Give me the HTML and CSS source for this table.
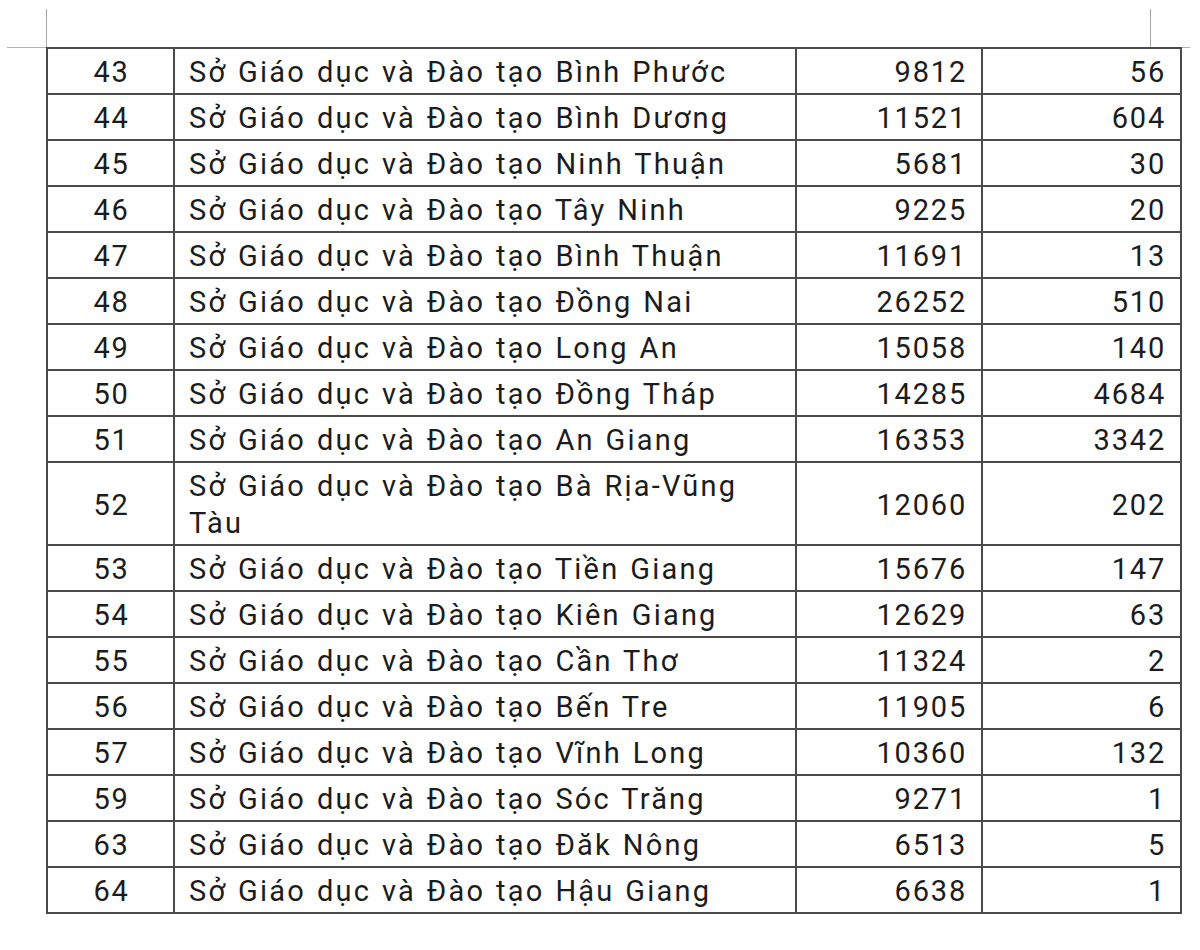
FILE: index.html
```html
<!DOCTYPE html>
<html lang="vi">
<head>
<meta charset="utf-8">
<link rel="stylesheet" href="styles.css">
</head>
<body>
<div class="marks"><div class="ticks"></div></div>
<table class="grid">
<colgroup><col class="c1"><col class="c2"><col class="c3"><col class="c4"></colgroup>
<tbody>
<tr><td class="no">43</td><td class="name">Sở Giáo dục và Đào tạo Bình Phước</td><td class="num">9812</td><td class="num">56</td></tr>
<tr><td class="no">44</td><td class="name">Sở Giáo dục và Đào tạo Bình Dương</td><td class="num">11521</td><td class="num">604</td></tr>
<tr><td class="no">45</td><td class="name">Sở Giáo dục và Đào tạo Ninh Thuận</td><td class="num">5681</td><td class="num">30</td></tr>
<tr><td class="no">46</td><td class="name">Sở Giáo dục và Đào tạo Tây Ninh</td><td class="num">9225</td><td class="num">20</td></tr>
<tr><td class="no">47</td><td class="name">Sở Giáo dục và Đào tạo Bình Thuận</td><td class="num">11691</td><td class="num">13</td></tr>
<tr><td class="no">48</td><td class="name">Sở Giáo dục và Đào tạo Đồng Nai</td><td class="num">26252</td><td class="num">510</td></tr>
<tr><td class="no">49</td><td class="name">Sở Giáo dục và Đào tạo Long An</td><td class="num">15058</td><td class="num">140</td></tr>
<tr><td class="no">50</td><td class="name">Sở Giáo dục và Đào tạo Đồng Tháp</td><td class="num">14285</td><td class="num">4684</td></tr>
<tr><td class="no">51</td><td class="name">Sở Giáo dục và Đào tạo An Giang</td><td class="num">16353</td><td class="num">3342</td></tr>
<tr><td class="no">52</td><td class="name">Sở Giáo dục và Đào tạo Bà Rịa-Vũng Tàu</td><td class="num">12060</td><td class="num">202</td></tr>
<tr><td class="no">53</td><td class="name">Sở Giáo dục và Đào tạo Tiền Giang</td><td class="num">15676</td><td class="num">147</td></tr>
<tr><td class="no">54</td><td class="name">Sở Giáo dục và Đào tạo Kiên Giang</td><td class="num">12629</td><td class="num">63</td></tr>
<tr><td class="no">55</td><td class="name">Sở Giáo dục và Đào tạo Cần Thơ</td><td class="num">11324</td><td class="num">2</td></tr>
<tr><td class="no">56</td><td class="name">Sở Giáo dục và Đào tạo Bến Tre</td><td class="num">11905</td><td class="num">6</td></tr>
<tr><td class="no">57</td><td class="name">Sở Giáo dục và Đào tạo Vĩnh Long</td><td class="num">10360</td><td class="num">132</td></tr>
<tr><td class="no">59</td><td class="name">Sở Giáo dục và Đào tạo Sóc Trăng</td><td class="num">9271</td><td class="num">1</td></tr>
<tr><td class="no">63</td><td class="name">Sở Giáo dục và Đào tạo Đăk Nông</td><td class="num">6513</td><td class="num">5</td></tr>
<tr><td class="no">64</td><td class="name">Sở Giáo dục và Đào tạo Hậu Giang</td><td class="num">6638</td><td class="num">1</td></tr>
</tbody>
</table>
</body>
</html>
```
FILE: styles.css
```css
html, body {
  margin: 0;
  padding: 0;
  background: #ffffff;
}
body {
  font-family: Roboto, "Noto Sans", "Liberation Sans", sans-serif;
  color: #1c1c1c;
}
.marks {
  margin: 9px 0 0 7px;
  width: 1183px;
  border-bottom: 1px solid #b0b0b0;
}
.ticks {
  margin-left: 39px;
  width: 1103px;
  height: 38px;
  border-left: 1px solid #a8a8a8;
  border-right: 1px solid #a8a8a8;
}
.grid {
  margin: -1px 0 0 46px;
  width: 1134px;
  border-collapse: collapse;
  table-layout: fixed;
  font-size: 29px;
  line-height: 37px;
}
.c1 { width: 127px; }
.c2 { width: 622px; }
.c3 { width: 186px; }
.c4 { width: 199px; }
.grid td {
  border: 2px solid #4a4a4a;
  padding: 5px 16px 2px 15px;
  vertical-align: middle;
}
.grid td.no {
  text-align: center;
  padding-left: 6px;
  padding-right: 4px;
  letter-spacing: 1.8px;
}
.grid td.name {
  text-align: left;
  padding-left: 14px;
  padding-right: 30px;
  letter-spacing: 2.2px;
  word-spacing: 1.5px;
}
.grid td.num {
  text-align: right;
  padding-right: 14px;
  letter-spacing: 1.8px;
}
```
